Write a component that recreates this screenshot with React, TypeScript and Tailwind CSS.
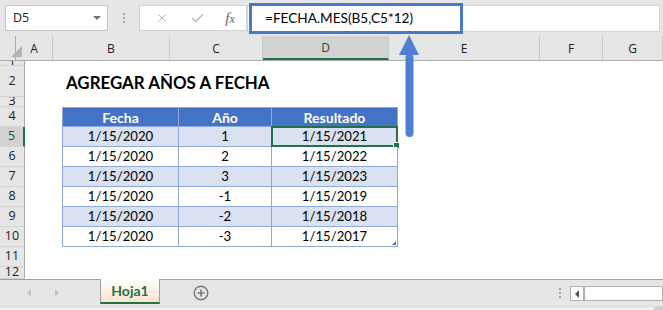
import React from "react";
import { X, Check } from "lucide-react";

const W = { A: 37, B: 117, C: 93, D: 126, E: 151, F: 63, G: 60 };

type Row = { n: number; h: number };
const rows: Row[] = [
  { n: 1, h: 5 },
  { n: 2, h: 31 },
  { n: 3, h: 10 },
  { n: 4, h: 20 },
  { n: 5, h: 20 },
  { n: 6, h: 20 },
  { n: 7, h: 20 },
  { n: 8, h: 20 },
  { n: 9, h: 20 },
  { n: 10, h: 20 },
  { n: 11, h: 20 },
  { n: 12, h: 12 },
];

const data: Record<number, [string, string, string]> = {
  5: ["1/15/2020", "1", "1/15/2021"],
  6: ["1/15/2020", "2", "1/15/2022"],
  7: ["1/15/2020", "3", "1/15/2023"],
  8: ["1/15/2020", "-1", "1/15/2019"],
  9: ["1/15/2020", "-2", "1/15/2018"],
  10: ["1/15/2020", "-3", "1/15/2017"],
};

function TableCells({ n }: { n: number }) {
  if (n === 4) {
    const hdr = ["Fecha", "Año", "Resultado"];
    return (
      <>
        {hdr.map((t, i) => (
          <div
            key={t}
            className={`h-full flex items-center justify-center bg-[#4472c4] text-white font-bold text-[14px] border-t border-b border-r border-[#8ea9db] ${i === 0 ? "border-l w-[117px]" : i === 1 ? "w-[93px]" : "w-[126px]"}`}
          >
            {t}
          </div>
        ))}
      </>
    );
  }
  const d = data[n];
  if (!d) return null;
  const bg = n % 2 === 1 ? "bg-[#d9e1f2]" : "bg-white";
  return (
    <>
      <div className={`w-[117px] h-full flex items-center justify-center ${bg} border-l border-r border-b border-[#8ea9db] text-[13.2px] text-black`}>
        {d[0]}
      </div>
      <div className={`w-[93px] h-full flex items-center justify-center ${bg} border-r border-b border-[#8ea9db] text-[13.2px] text-black`}>
        {d[1]}
      </div>
      <div className={`w-[126px] h-full flex items-center justify-center ${bg} border-r border-b border-[#8ea9db] text-[13.2px] text-black relative`}>
        {d[2]}
        {n === 5 && (
          <div className="absolute left-[-1px] top-[-1px] w-[127px] h-[21px] border-2 border-[#217346]">
            <div className="absolute right-[-4px] bottom-[-4px] w-[5px] h-[5px] bg-[#217346] border border-white box-content" />
          </div>
        )}
        {n === 10 && (
          <div className="absolute right-[1px] bottom-[1px] w-0 h-0 border-l-[4px] border-l-transparent border-b-[4px] border-b-[#4472c4]" />
        )}
      </div>
    </>
  );
}

export default function App() {
  return (
    <div className="w-[663px] h-[310px] relative overflow-hidden bg-white font-['Lato',sans-serif]">
      {/* Formula bar */}
      <div className="h-[36px] bg-[#e6e6e6] flex items-start pt-[5px] pl-[5px]">
        <div className="w-[103px] h-[26px] bg-white border border-[#c6c6c6] flex items-center pl-[7px] relative">
          <span className="font-['Open_Sans',sans-serif] text-[12.5px] text-[#222]">D5</span>
          <div className="absolute right-[6px] top-[10px] w-0 h-0 border-l-[4px] border-l-transparent border-r-[4px] border-r-transparent border-t-[4px] border-t-[#777]" />
        </div>
        <div className="w-[31px] h-[26px] flex flex-col items-center justify-center gap-[2px]">
          <div className="w-[2px] h-[2px] bg-[#a8a8a8]" />
          <div className="w-[2px] h-[2px] bg-[#a8a8a8]" />
          <div className="w-[2px] h-[2px] bg-[#a8a8a8]" />
        </div>
        <div className="w-[108px] h-[26px] bg-white border border-[#d4d4d4] flex items-center">
          <div className="w-[40px] flex justify-center pl-[4px]">
            <X size={14} strokeWidth={1.6} color="#b5b5b5" />
          </div>
          <div className="w-[34px] flex justify-center">
            <Check size={15} strokeWidth={2} color="#b5b5b5" />
          </div>
          <div className="w-[32px] flex justify-center">
            <span className="font-['Liberation_Serif',serif] italic text-[15px] text-[#666] leading-none">
              f<span className="text-[12px]">x</span>
            </span>
          </div>
        </div>
        <div className="flex-1 h-[27px] bg-white border border-[#d4d4d4] mr-[3px] flex items-center pl-[17px]">
          <span className="text-[13.6px] text-black">=FECHA.MES(B5,C5*12)</span>
        </div>
      </div>

      {/* Column headers */}
      <div className="h-[25px] flex bg-[#e6e6e6] border-b border-[#ababab] font-['Open_Sans',sans-serif] text-[12px] text-[#222]">
        <div className="w-[25px] h-full border-r border-[#ababab] relative">
          <div className="absolute left-[11px] top-[10px] w-0 h-0 border-l-[11px] border-l-transparent border-b-[11px] border-b-[#b4b4b4]" />
        </div>
        {(["A", "B", "C", "D", "E", "F", "G"] as const).map((c) => (
          <div
            key={c}
            style={{ width: W[c] }}
            className={`h-full flex items-center justify-center pt-[2px] shrink-0 border-r border-[#c8c8c8] ${c === "D" ? "bg-[#d2d2d2] border-b-2 border-b-[#217346] text-[#1f4e35]" : ""}`}
          >
            {c}
          </div>
        ))}
      </div>

      {/* Rows */}
      <div className="flex flex-col">
        {rows.map((r) => (
          <div key={r.n} className="flex" style={{ height: r.h }}>
            <div
              className={`w-[25px] h-full shrink-0 overflow-hidden flex items-center justify-center border-b border-[#d4d4d4] font-['Open_Sans',sans-serif] text-[12.5px] leading-none ${r.n === 5 ? "bg-[#d2d2d2] border-r-2 border-r-[#217346] text-[#1f4e35]" : "bg-[#e6e6e6] border-r border-r-[#ababab] text-[#222]"}`}
            >
              {r.n}
            </div>
            <div className="w-[37px] shrink-0" />
            {r.n === 2 ? (
              <div className="flex items-end pb-[5px] pl-[4px] whitespace-nowrap font-bold text-[16.9px] text-black leading-none">
                AGREGAR AÑOS A FECHA
              </div>
            ) : (
              <TableCells n={r.n} />
            )}
          </div>
        ))}
      </div>

      {/* Sheet tab bar */}
      <div className="h-[27px] bg-[#e6e6e6] border-t border-[#a0a0a0] flex items-start relative">
        <div className="w-[100px] h-full flex items-center">
          <div className="ml-[27px] w-0 h-0 border-t-[4px] border-t-transparent border-b-[4px] border-b-transparent border-r-[4px] border-r-[#c4c4c4]" />
          <div className="ml-[24px] w-0 h-0 border-t-[4px] border-t-transparent border-b-[4px] border-b-transparent border-l-[4px] border-l-[#c4c4c4]" />
        </div>
        <div className="w-[60px] h-[25px] -mt-[1px] bg-gradient-to-b from-white to-[#fbe2d0] border-l border-r border-[#a0a0a0] border-b-2 border-b-[#217346] flex items-center justify-center">
          <span className="font-bold text-[14px] text-[#217346]">Hoja1</span>
        </div>
        <div className="w-[82px] h-full flex items-center justify-center">
          <svg width="16" height="16" viewBox="0 0 16 16">
            <circle cx="8" cy="8" r="6.8" fill="none" stroke="#7a7a7a" strokeWidth="1.4" />
            <path d="M8 4.5v7M4.5 8h7" stroke="#7a7a7a" strokeWidth="1.6" />
          </svg>
        </div>
        <div className="flex-1" />
        <div className="w-[10px] h-full flex flex-col items-center justify-center gap-[2px] mr-[5px]">
          <div className="w-[2px] h-[2px] bg-[#a8a8a8]" />
          <div className="w-[2px] h-[2px] bg-[#a8a8a8]" />
          <div className="w-[2px] h-[2px] bg-[#a8a8a8]" />
        </div>
        <div className="w-[93px] h-[15px] mt-[6px] flex border border-[#b0b0b0] bg-white">
          <div className="w-[14px] h-full border-r-2 border-[#b0b0b0] flex items-center justify-center">
            <div className="w-0 h-0 border-t-[4px] border-t-transparent border-b-[4px] border-b-transparent border-r-[4px] border-r-[#555]" />
          </div>
          <div className="flex-1" />
        </div>
      </div>
      <div className="h-[4px] bg-[#f0f0f0] border-t border-[#d8d8d8] flex justify-end">
        <div className="w-[9px] h-full bg-[#cfcfcf]" />
      </div>

      {/* Annotation: formula highlight box */}
      <div className="absolute left-[249px] top-[3px] w-[214px] h-[31px] border-[3px] border-[#4a78c8]" />
      {/* Annotation: arrow */}
      <svg className="absolute left-[398px] top-[34px]" width="22" height="104" viewBox="0 0 22 104">
        <path d="M11 1 L21 21 L1 21 Z" fill="#4f7fd0" />
        <rect x="7.5" y="20" width="8" height="83" rx="4" fill="#4f7fd0" />
      </svg>
    </div>
  );
}
